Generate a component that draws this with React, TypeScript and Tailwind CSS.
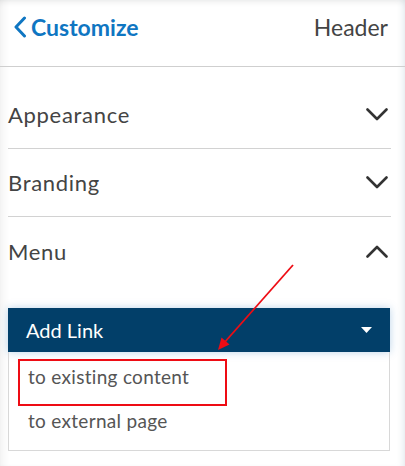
import React from 'react';

const font = { fontFamily: 'Lato, "Open Sans", sans-serif' };

const ChevronDown = () => (
  <svg width="22" height="13" viewBox="0 0 22 13" fill="none">
    <path d="M1.5 1.5 L11 11 L20.5 1.5" stroke="#333" strokeWidth="2.6" strokeLinecap="round" strokeLinejoin="round" />
  </svg>
);

const ChevronUp = () => (
  <svg width="22" height="13" viewBox="0 0 22 13" fill="none">
    <path d="M1.5 11.5 L11 2 L20.5 11.5" stroke="#333" strokeWidth="2.6" strokeLinecap="round" strokeLinejoin="round" />
  </svg>
);

const sections = [
  { name: 'Appearance', open: false },
  { name: 'Branding', open: false },
  { name: 'Menu', open: true },
];

export default function App() {
  return (
    <div
      className="relative w-[405px] h-[466px] bg-white overflow-hidden shadow-[inset_10px_0_10px_-8px_rgba(0,0,0,0.07),inset_-6px_0_6px_-4px_rgba(120,150,170,0.2),inset_0_6px_6px_-4px_rgba(0,0,0,0.08)]"
      style={font}
    >
      {/* Header */}
      <div className="h-[67px] flex items-start justify-between pt-[13px] pl-[13px] pr-[17px] border-b border-[#cfcfcf]">
        <div className="flex items-center gap-[4px] text-[#0f76c2]">
          <svg width="14" height="22" viewBox="0 0 14 22" fill="none">
            <path d="M11.5 2 L3 11 L11.5 20" stroke="#0f76c2" strokeWidth="3" strokeLinecap="round" strokeLinejoin="round" />
          </svg>
          <span className="text-[23px] leading-[28px] font-bold">Customize</span>
        </div>
        <span className="text-[23px] leading-[28px] text-[#444]">Header</span>
      </div>

      {/* Sections */}
      <div className="pt-[14px] pl-2 pr-[14px]">
        {sections.map((s, i) => (
          <div
            key={s.name}
            className={`h-[68px] flex items-center justify-between pr-[3px] ${i < 2 ? 'border-b border-[#d2d2d2]' : ''}`}
          >
            <span className="text-[22px] tracking-[0.7px] text-[#444]">{s.name}</span>
            {s.open ? <ChevronUp /> : <ChevronDown />}
          </div>
        ))}
      </div>

      {/* Dropdown */}
      <div className="mt-[23px] ml-2 w-[382px]">
        <div className="h-[44px] bg-[#023f69] flex items-center justify-between pl-[18px] pr-[18px] shadow-[0_0_8px_rgba(60,130,190,0.35)]">
          <span className="text-[20px] text-white">Add Link</span>
          <svg width="11" height="6" viewBox="0 0 11 6">
            <path d="M0 0 H11 L5.5 6 Z" fill="white" />
          </svg>
        </div>
        <div className="border border-t-0 border-[#d8d8d8] h-[99px] pt-[2px]">
          <div className="h-[46px] flex items-center pl-[19px] text-[19px] tracking-[0.3px] text-[#555]">to existing content</div>
          <div className="h-[42px] flex items-center pl-[19px] text-[19px] tracking-[0.3px] text-[#555]">to external page</div>
        </div>
      </div>

      {/* Annotation overlay */}
      <div className="absolute left-[18px] top-[359px] w-[209px] h-[47px] border-2 border-[#ee0c14]" />
      <svg className="absolute left-0 top-0" width="405" height="466" viewBox="0 0 405 466">
        <line x1="293" y1="265" x2="224" y2="343" stroke="#ee0c14" strokeWidth="1.8" />
        <path d="M218 350 L221.5 337.5 L229.5 344.5 Z" fill="#ee0c14" />
      </svg>
    </div>
  );
}
